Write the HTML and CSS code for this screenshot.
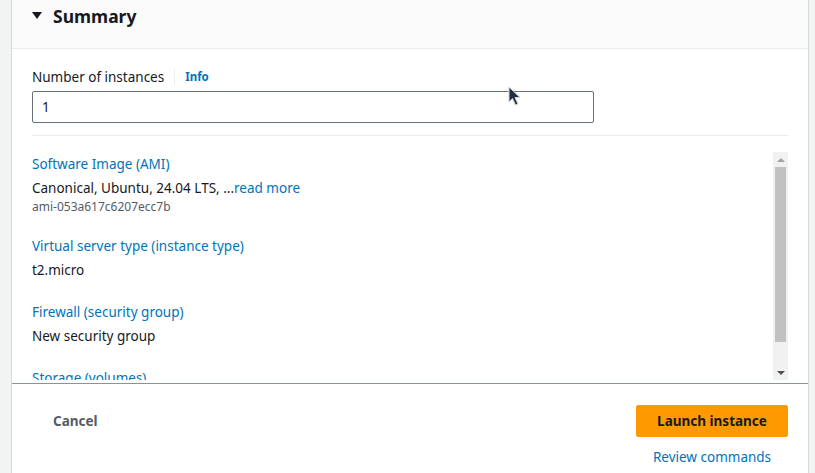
FILE: index.html
```html
<!DOCTYPE html>
<html lang="en">
<head>
<meta charset="utf-8">
<title>Summary</title>
<link rel="stylesheet" href="styles.css">
</head>
<body>
<div class="card">
  <div class="card-header">
    <span class="caret"></span>
    <h2 class="title">Summary</h2>
  </div>
  <div class="card-body">
    <div class="field">
      <div class="field-label">
        <span>Number of instances</span>
        <span class="sep"></span>
        <a class="info">Info</a>
      </div>
      <div class="input">1</div>
    </div>
    <div class="divider"></div>
    <div class="scroll-area">
      <div class="scroll-content">
        <div class="item">
          <a class="item-title">Software Image (AMI)</a>
          <div class="item-value">Canonical, Ubuntu, 24.04 LTS, ...<a class="link">read more</a></div>
          <div class="item-sub">ami-053a617c6207ecc7b</div>
        </div>
        <div class="item">
          <a class="item-title">Virtual server type (instance type)</a>
          <div class="item-value">t2.micro</div>
        </div>
        <div class="item">
          <a class="item-title">Firewall (security group)</a>
          <div class="item-value">New security group</div>
        </div>
        <div class="item">
          <a class="item-title">Storage (volumes)</a>
          <div class="item-value">1 volume(s) - 8 GiB</div>
        </div>
      </div>
      <div class="scrollbar">
        <div class="sb-btn"><span class="arrow-up"></span></div>
        <div class="sb-track"><div class="sb-thumb"></div></div>
        <div class="sb-btn"><span class="arrow-down"></span></div>
      </div>
    </div>
  </div>
  <div class="card-footer">
    <button class="btn-cancel">Cancel</button>
    <div class="actions">
      <button class="btn-primary">Launch instance</button>
      <a class="link review">Review commands</a>
    </div>
  </div>
</div>
<svg class="cursor" width="14" height="22" viewBox="0 0 14 22">
  <path d="M1 1 L1 16 L4.5 12.5 L7.5 19 L10 18 L7 11.5 L12 11.5 Z" fill="#232f3e" stroke="#d0d4d8" stroke-width="1"/>
</svg>
</body>
</html>
```
FILE: styles.css
```css
* { box-sizing: border-box; }
html, body { margin: 0; padding: 0; }
body {
  background: #f2f3f3;
  font-family: "Noto Sans", "Open Sans", Arial, sans-serif;
  color: #16191f;
  font-size: 13.5px;
  height: 473px;
  overflow: hidden;
  position: relative;
}
a { color: #0073bb; text-decoration: none; }
.card {
  margin-left: 11px;
  width: 798px;
  background: #fff;
  border-left: 1px solid #d5dbdb;
  border-right: 1px solid #d5dbdb;
  height: 473px;
}
.card-header {
  height: 49px;
  background: #fafafa;
  border-bottom: 1px solid #eaeded;
  display: flex;
  align-items: flex-start;
  padding: 5px 20px 0 20px;
  gap: 11px;
}
.caret {
  display: block;
  width: 0; height: 0;
  margin-top: 7px;
  border-left: 5px solid transparent;
  border-right: 5px solid transparent;
  border-top: 7px solid #16191f;
}
.title {
  margin: 0;
  font-size: 17.5px;
  font-weight: 700;
  line-height: 22px;
}
.card-body { padding: 0 20px; }
.field { padding-top: 17px; }
.field-label {
  display: flex;
  align-items: center;
  height: 22px;
  line-height: 22px;
}
.sep {
  width: 1px;
  height: 16px;
  background: #eaeded;
  margin: 0 10px;
}
.info { font-size: 11.5px; font-weight: 700; }
.input {
  margin-top: 3px;
  width: 562px;
  height: 32px;
  border: 1px solid #687078;
  border-radius: 2px;
  padding: 0 9px;
  line-height: 30px;
}
.divider {
  margin-top: 12px;
  height: 1px;
  background: #eaeded;
}
.scroll-area {
  margin-top: 16px;
  height: 228px;
  display: flex;
}
.scroll-content {
  flex: 1;
  overflow: hidden;
  padding-top: 1px;
}
.scrollbar {
  width: 15px;
  background: #f1f1f1;
  display: flex;
  flex-direction: column;
}
.sb-btn {
  height: 15px;
  display: flex;
  align-items: center;
  justify-content: center;
}
.arrow-up {
  width: 0; height: 0;
  border-left: 4px solid transparent;
  border-right: 4px solid transparent;
  border-bottom: 4px solid #a3a3a3;
}
.arrow-down {
  width: 0; height: 0;
  border-left: 4px solid transparent;
  border-right: 4px solid transparent;
  border-top: 4px solid #505050;
}
.sb-track { flex: 1; padding: 0 2px; }
.sb-thumb { height: 175px; background: #c1c1c1; }
.item + .item { margin-top: 20px; }
.item-title { display: block; line-height: 22px; }
.item-value { margin-top: 2px; line-height: 22px; }
.item-sub { font-size: 12px; line-height: 16px; color: #545b64; }
.card-footer {
  border-top: 1px solid #879596;
  margin-top: 3px;
  padding: 21px 20px 0 20px;
  display: flex;
  justify-content: space-between;
  align-items: flex-start;
}
.btn-cancel {
  font-family: inherit;
  background: none;
  border: none;
  font-weight: 700;
  font-size: 13.5px;
  color: #545b64;
  height: 32px;
  padding: 0 21px;
}
.actions {
  display: flex;
  flex-direction: column;
  align-items: center;
}
.btn-primary {
  font-family: inherit;
  width: 152px;
  height: 32px;
  background: #ff9900;
  border: 1px solid #ff9900;
  border-radius: 2px;
  font-weight: 700;
  font-size: 13.5px;
  color: #16191f;
}
.review { margin-top: 9px; line-height: 22px; }
.cursor { position: absolute; left: 508px; top: 86px; }
```
